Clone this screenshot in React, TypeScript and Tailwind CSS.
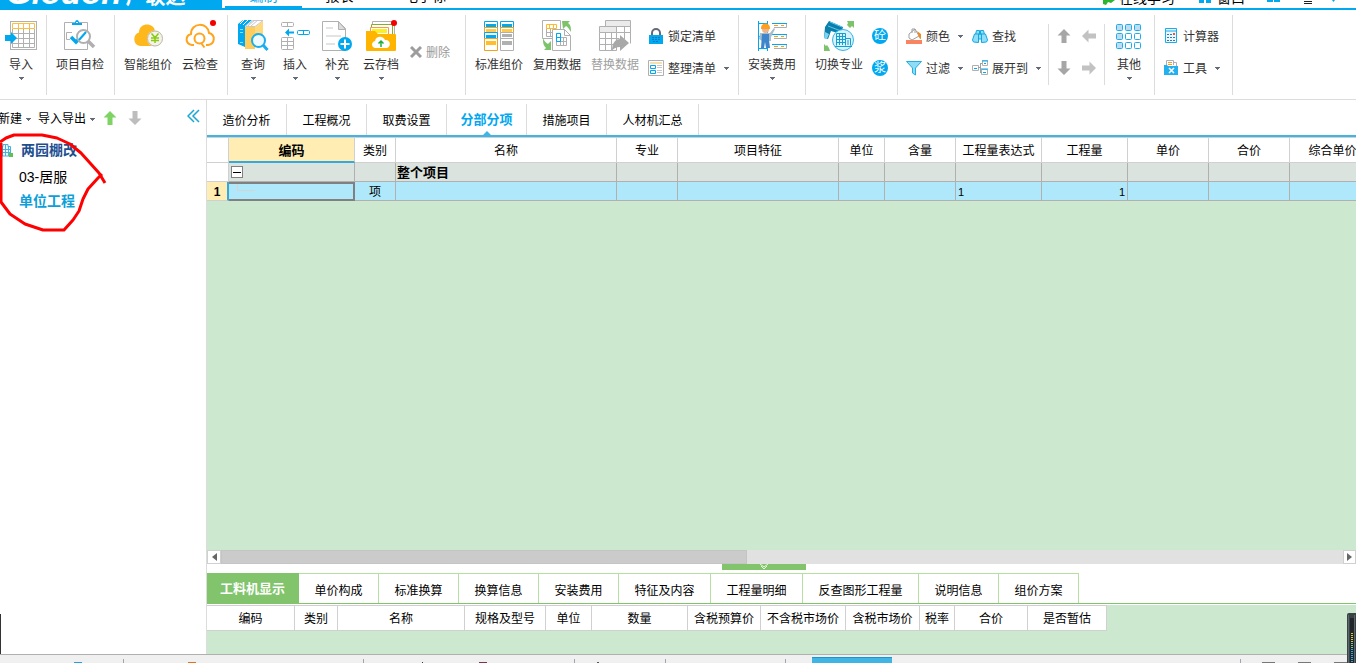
import { ReactNode, useState } from "react";
import clsx from "clsx";

const BLUE = "#00a8f0";
const GRAY = "#b0b0b0";

function Caret() {
    return (
        <svg width="5" height="3" viewBox="0 0 5 3" className="shrink-0">
            <path d="M0 0h5v1H0zM1 1h3v1H1zM2 2h1v1H2z" fill="#666b7a" />
        </svg>
    );
}

function Svg({ size = 32, children }: { size?: number; children: ReactNode }) {
    return (
        <svg
            width={size}
            height={size}
            viewBox={`0 0 ${size} ${size}`}
            fill="none"
            className="shrink-0"
        >
            {children}
        </svg>
    );
}

/* ---------- large icons ---------- */

const ImportIcon = () => (
    <Svg>
        <rect x="5.5" y="1.5" width="26" height="28" stroke={GRAY} />
        <path d="M8 13.500h22M8 18.500h22M8 23.500h22M13.500 9v18M18.500 9v18M24.500 9v18" stroke={GRAY} />
        <path d="M7.500 9v18.500h22V9" stroke={GRAY} />
        <path d="M7.500 3.500h22v5h-22zM13.500 4v5M18.500 4v5M24.500 4v5" stroke="#ffbf3a" />
        <path d="M0 15h6v-3l6 6-6 6v-3H0z" fill={BLUE} />
    </Svg>
);

const SelfCheckIcon = () => (
    <Svg>
        <path d="M.5 2.500h23v27H.5z" stroke={GRAY} />
        <path d="M8 5V3h3c0-4 4-4 4 0h3v2z" fill={BLUE} />
        <path d="M12 2.500h2" stroke="#fff" />
        <path d="M8 12.500H2.500v7H6" stroke={GRAY} />
        <path d="M7 17l5 5 4-4" stroke={BLUE} strokeWidth="3.500" />
        <circle cx="19.500" cy="16.500" r="6.500" stroke={GRAY} strokeWidth="2" fill="#fff" />
        <path d="M15 20l7-8" stroke={BLUE} strokeWidth="2" />
        <path d="M24 21l6 6" stroke={GRAY} strokeWidth="3.500" />
    </Svg>
);

const SmartPriceIcon = () => (
    <Svg>
        <path d="M8 26a7 7 0 0 1-1-13.500C7 2 22 2 23 11c6 1 6 15 0 15z" fill="#ffb81c" />
        <circle cx="23" cy="18.500" r="8" fill="#f4f2ea" />
        <circle cx="23" cy="18.500" r="7.500" stroke="#bdb9a8" />
        <path d="M19.500 13.500l3.500 4 3.500-4M19 18h8M19 20.500h8M23 17v6" stroke="#8acb12" strokeWidth="1.500" />
    </Svg>
);

const CloudCheckIcon = () => (
    <Svg>
        <path d="M10 25H8c-7-1-7-9-1-11C7 2 24 2 25 13c7 2 6 11-1 12h-2" stroke="#ffa41c" strokeWidth="2" />
        <circle cx="15.500" cy="18.500" r="5" stroke="#ffa41c" strokeWidth="2" />
        <path d="M17 23l3.500 4.500" stroke="#ffa41c" strokeWidth="2" />
        <circle cx="29" cy="3" r="3" fill="#f30000" />
    </Svg>
);

const QueryIcon = () => (
    <Svg>
        <path d="M1 4l5-4h9L8 6v21l-7-3z" fill={BLUE} />
        <path d="M3 4l4-4M6 5l5-5" stroke="#fff" />
        <path d="M3 9.500h3M3 12.500h3M3 22.500h3" stroke="#8fdcff" />
        <path d="M8 7h10v22H8z" fill="#ffcd5c" />
        <path d="M18 7l8-6v17l-8 10z" fill="#ffd97c" />
        <path d="M8.500 6.500L16 .5h10l-8 6z" fill="#fff" stroke="#c8c8c8" />
        <path d="M11 6l7-6M14 6l7-6" stroke="#c8c8c8" />
        <circle cx="21.500" cy="20.500" r="6.500" fill="#eefaff" stroke="#1badec" strokeWidth="2" />
        <path d="M26 25l4.500 5" stroke="#1badec" strokeWidth="3" />
    </Svg>
);

const InsertIcon = () => (
    <Svg>
        <rect x="2.500" y="2.500" width="12" height="4" rx="1" stroke={GRAY} />
        <path d="M8.500 3v3" stroke={GRAY} />
        <rect x="2.500" y="17.500" width="12" height="12" rx="1" stroke={GRAY} />
        <path d="M8.500 17v12M3 21.500h11M3 25.500h11" stroke={GRAY} />
        <path d="M6 12.500l4-4v3h5v2h-5v3z" fill={BLUE} />
        <rect x="18.500" y="10.500" width="12" height="4" rx="1" stroke={BLUE} />
        <path d="M24.500 11v3" stroke={BLUE} />
    </Svg>
);

const SupplementIcon = () => (
    <Svg>
        <path d="M1.500 1.500h16l7 7v22h-23z" fill="#fff" stroke={GRAY} />
        <path d="M17.500 1.500v8h7z" fill="#dcdcdc" stroke={GRAY} />
        <path d="M5 8h7M5 16h15M5 24h9" stroke="#e3e3e3" strokeWidth="2" />
        <circle cx="24" cy="24" r="7" fill={BLUE} />
        <path d="M24 19.500v9M19.500 24h9" stroke="#fff" strokeWidth="2" />
    </Svg>
);

const CloudArchiveIcon = () => (
    <Svg>
        <path d="M7.500 12V1.500h22V18" fill="#fff" stroke={GRAY} />
        <path d="M6.500 12V4.500h21V18" fill="#fff" stroke="#8aad20" />
        <path d="M5.500 12V7.500h18V18" fill="#fff" stroke="#ef9a58" />
        <path d="M7 9h15v4H7z" fill="#fff01c" />
        <path d="M1 11h9l3 3h17a1 1 0 0 1 1 1v15a1 1 0 0 1-1 1H2a1 1 0 0 1-1-1z" fill="#ffb400" />
        <path d="M10 28c-4-1-4-6 0-7 1-6 9-5 10-1 5-1 7 6 2 8z" fill="#fff" />
        <path d="M16 27v-6M13.500 23.500L16 21l2.500 2.500" stroke="#1fae3a" strokeWidth="1.500" />
        <circle cx="29" cy="3" r="3" fill="#f30000" />
    </Svg>
);

const StandardIcon = () => (
    <Svg>
        <path d="M1.500 1.500h13v6h-13zM17.500 1.500h13v6h-13z" stroke={BLUE} />
        <path d="M3 4h10v3H3zM19 4h10v3H19z" fill={BLUE} />
        <path d="M1.500 7.500h13v5h-13zM17.500 7.500h13v5h-13z" stroke="#f5a11c" />
        <path d="M3 9h10v3H3zM19 9h10v3H19z" fill="#ffcb4c" />
        <path d="M1.500 12.500h13v6h-13z" stroke={BLUE} />
        <path d="M3 15h10v3H3z" fill={BLUE} />
        <path d="M1.500 18.500h13v12h-13z" stroke="#f5a11c" />
        <path d="M3 21h10v4H3z" fill="#ffbf2c" />
        <path d="M17.500 12.500h13v18h-13zM17.500 18.500h13" stroke={GRAY} />
        <path d="M19 14h10v3H19zM19 21h10v4H19z" fill={GRAY} />
    </Svg>
);

const ReuseIcon = () => (
    <Svg>
        <path d="M1.500.5h18v18h-18z" stroke={GRAY} />
        <path d="M5.500 8.500h9v8h-9zM5 12.500h10M9.500 8v8" stroke={GRAY} />
        <path d="M5.500 4.500h10v4h-10zM8.500 4v4M12.500 4v4" stroke="#ffb92c" />
        <path d="M11.500 9.500h12l6 6v15h-18z" fill="#fff" stroke={GRAY} />
        <path d="M23.500 9.500v6h6" stroke={GRAY} />
        <path d="M15.500 13.500h4v12h-4zM19.500 17.500h6v8h-6zM15 21.500h10M22.500 17v8" stroke={GRAY} />
        <path d="M15.500 13.500h4v4h-4zM15.500 17.500h4v4h-4z" stroke={BLUE} />
        <path d="M21 1h8l-2 2c3 2 3 5 3 9-2-3-3-5-5-6l-3 3z" fill="#7cc36a" />
        <path d="M10 30H3l2-2c-3-3-3-6-3-10 1 3 3 5 5 6l3-3z" fill="#7cc36a" />
    </Svg>
);

const ReplaceIcon = () => (
    <Svg>
        <path d="M6.500.5h25v6h-25z" fill="#ebebeb" stroke={GRAY} />
        <path d="M18 6.500h13.500v17M18 12.500h13M25.500 7v12" stroke={GRAY} />
        <path d="M.5 6.500h17v6H.5z" fill="#ebebeb" stroke={GRAY} />
        <path d="M.5 12.500v18h17v-18M.5 18.500h20M.5 24.500h17M6.500 13v17M12.500 13v17" stroke={GRAY} />
        <path d="M13 31c0-9 4-12 8-12v-4l9 8-9 8v-4c-4 0-6 1-8 4z" fill="#a8a8a8" />
    </Svg>
);

const InstallIcon = () => (
    <Svg>
        <path d="M2.500 1v30M11.500 1v30M2 3.500h10M2 16.500h10M2 28.500h10" stroke={BLUE} />
        <path d="M16 3.500h14.500v4H18M16 14.500h14.500v4H18M16 24.500h14.500v4H18" stroke={GRAY} />
        <path d="M16 3.500h15M16 14.500h15M16 24.500h15" stroke={BLUE} />
        <path d="M18 5.500h4M25 5.500h3M18 16.500h4M25 16.500h3M18 26.500h4M25 26.500h3" stroke="#f5a11c" />
        <circle cx="9.500" cy="9.500" r="3.500" fill="#e9b48f" />
        <path d="M5 8a4.500 4.500 0 0 1 9 0v1H5z" fill="#ff9f1c" />
        <path d="M4 13h10l4-5 1 1-4 8v4H6l-3-2z" fill="#a8bccb" />
        <path d="M6 14h7v6l1 8h-4l-1-6-1 6H5z" fill="#3e86cc" />
    </Svg>
);

const SwitchIcon = () => (
    <Svg>
        <path d="M2 7l4-6 14 6-2 7-10-3-3 8-4-1z" fill="#0b7fab" />
        <path d="M7 2l12 5M5 6l13 5" stroke="#5ccaf0" />
        <path d="M2 12l4 2-2 5-3-1z" fill="#7ad4f2" />
        <circle cx="20" cy="20" r="10.500" fill="#d8f2fc" stroke="#35b5e8" />
        <path d="M13.500 25.500v-12h9v12M22.500 18.500h5v7M12 26.500h17" stroke="#159fd0" />
        <path d="M16.500 14v11M19.500 14v11M14 16.500h8M14 19.500h8M14 22.500h8M25 20v5" stroke="#159fd0" />
        <path d="M24 1h7v7l-2-2-2 2-3-3 1-2z" fill="#7cc36a" />
        <path d="M7 31H1v-7l2 2 1-1 2 3z" fill="#7cc36a" />
    </Svg>
);

const OtherIcon = () => (
    <Svg>
        {[4, 13, 22].map((y, r) =>
            [3, 12, 21].map((x, c) => (
                <rect
                    key={`${x}-${y}`}
                    x={x + 0.5}
                    y={y + 0.5}
                    width="6"
                    height="6"
                    rx="1"
                    stroke="#1badec"
                    fill={r === 0 || c === 0 ? "#bfdcf0" : "#fff"}
                />
            )),
        )}
    </Svg>
);

/* ---------- small icons ---------- */

const LockIcon = () => (
    <Svg size={16}>
        <path d="M4 8V5a4 4 0 0 1 8 0v3" stroke="#64697a" strokeWidth="2" />
        <path d="M1 7h14v9H1z" fill={BLUE} />
        <path d="M4 9.500h8M4 11.500h8M5 13.500h6" stroke="#0878c0" strokeDasharray="2 1" />
    </Svg>
);

const ArrangeIcon = () => (
    <Svg size={16}>
        <path d="M.5.5h15v15H.5z" stroke={GRAY} />
        <path d="M2 3h12" stroke="#f7dfae" strokeWidth="2" />
        <path d="M2.500 5.500h5v3h-5zM2.500 10.500h5v3h-5z" stroke={BLUE} />
        <path d="M9 5.500h5M9 7.500h5M9 10.500h5M9 12.500h5" stroke="#c8c8c8" />
    </Svg>
);

const DeleteIcon = () => (
    <Svg size={12}>
        <path d="M1 1l10 10M11 1L1 11" stroke="#9d9d9d" strokeWidth="3" />
    </Svg>
);

const ColorIcon = () => (
    <Svg size={16}>
        <path d="M0 12h16v4H0z" fill="#f98560" />
        <path d="M3 6l6-5 4 7-7 4-3-2z" fill="#fff" stroke="#a0a0a0" />
        <path d="M6 5V1h3v4" stroke="#a0a0a0" />
        <path d="M11 3l4 3v5c-2 0-2-3-3-5z" fill="#ef8a24" />
    </Svg>
);

const FilterIcon = () => (
    <Svg size={16}>
        <path d="M.5 1.500h15L9.500 8v7l-3-2V8z" fill="#8fdcf7" stroke="#23aee4" />
    </Svg>
);

const FindIcon = () => (
    <Svg size={16}>
        <path d="M3.500 6.500l1-4h3v4M8.500 6.500v-4h3l1 4M6 6h4v5H6z" fill="#8fdcf7" stroke="#16a6de" />
        <path d="M2.500 6h4v8.500l-5-.5-1-2zM13.500 6h-4v8.500l5-.5 1-2z" fill="#8ee0fa" stroke="#16a6de" />
    </Svg>
);

const ExpandIcon = () => (
    <Svg size={16}>
        <path d="M.5 5.500h6v5h-6zM10.500.5h5v5h-5zM9.500 9.500h6v5h-6z" stroke={GRAY} />
        <path d="M6 7.500h2M8.500 3v9M8 3.500h2M8 12.500h2" stroke="#a0a0a0" />
        <path d="M10 1h6M9 9h7" stroke={BLUE} />
        <path d="M12 3.500h2M11 12.500h3M2 8.500h3" stroke={BLUE} />
    </Svg>
);

const CalculatorIcon = () => (
    <Svg size={16}>
        <path d="M2.500.5h11v14h-11z" fill="#e9f8ff" stroke="#1badec" />
        <path d="M3 3h10" stroke="#7fd2f5" strokeWidth="2" />
        <path d="M4 6.500h6M4 9.500h9M4 12.500h9" stroke="#2f78b8" strokeDasharray="2 1" />
        <path d="M10 5h2v2h-2z" fill="#f0562f" />
    </Svg>
);

const ToolsIcon = () => (
    <Svg size={16}>
        <path d="M3.500 5V.5h7V5M10.500 2.500h3V6" fill="#fff" stroke={GRAY} />
        <path d="M5 2.500h4M5 4.500h4" stroke="#f5a11c" />
        <path d="M1 5h3l1 1h10v9H1z" fill="#22b1ee" />
        <path d="M6 8l5 5M11 8l-5 5" stroke="#fff" strokeWidth="1.500" />
    </Svg>
);

const ArrowIcon = ({ dir, color }: { dir: "up" | "down" | "left" | "right"; color: string }) => {
    const angle = { up: 0, right: 90, down: 180, left: 270 }[dir];
    return (
        <Svg size={16}>
            <path d="M8 1l6.500 6.500H10.500V15H5.500V7.500H1.500z" fill={color} transform={`rotate(${angle} 8 8)`} />
        </Svg>
    );
};

/* ---------- ribbon ---------- */

type BigToolProps = {
    icon: ReactNode;
    label: string;
    width: string;
    menu?: boolean;
    disabled?: boolean;
};

function BigTool({ icon, label, width, menu, disabled }: BigToolProps) {
    return (
        <button
            disabled={disabled}
            className={clsx(
                "flex shrink-0 flex-col items-center pt-[5px] whitespace-nowrap",
                width,
                disabled ? "text-[#a0a0a0]" : "text-[#333]",
            )}
        >
            {icon}
            <span className="mt-[5px] mb-1 leading-4">{label}</span>
            {menu && <Caret />}
        </button>
    );
}

function SmallTool({
    icon,
    label,
    menu,
    disabled,
}: {
    icon: ReactNode;
    label: string;
    menu?: boolean;
    disabled?: boolean;
}) {
    return (
        <button
            disabled={disabled}
            className={clsx(
                "flex h-4 items-center whitespace-nowrap leading-4",
                disabled ? "text-[#999]" : "text-[#333]",
            )}
        >
            {icon}
            <span className="mr-2 ml-1 pt-[2px]">{label}</span>
            {menu && <Caret />}
        </button>
    );
}

function Group({ className, children }: { className?: string; children: ReactNode }) {
    return (
        <div className={clsx("flex h-20 shrink-0 border-r border-[#dcdcdc]", className)}>
            {children}
        </div>
    );
}

function Ribbon() {
    return (
        <div className="flex h-[90px] shrink-0 overflow-hidden border-b border-[#dcdcdc] pt-[5px]">
            <Group className="w-[47px]">
                <BigTool icon={<ImportIcon />} label="导入" width="w-[42px]" menu />
            </Group>
            <Group className="w-[68px]">
                <BigTool icon={<SelfCheckIcon />} label="项目自检" width="w-[66px]" />
            </Group>
            <Group className="w-[113px] pl-1">
                <BigTool icon={<SmartPriceIcon />} label="智能组价" width="w-[58px]" />
                <BigTool icon={<CloudCheckIcon />} label="云检查" width="w-[46px]" />
            </Group>
            <Group className="w-[238px] pl-1">
                <BigTool icon={<QueryIcon />} label="查询" width="w-[42px]" menu />
                <BigTool icon={<InsertIcon />} label="插入" width="w-[42px]" menu />
                <BigTool icon={<SupplementIcon />} label="补充" width="w-[42px]" menu />
                <BigTool icon={<CloudArchiveIcon />} label="云存档" width="w-[46px]" menu />
                <div className="pt-[29px] pl-[6px]">
                    <SmallTool icon={<DeleteIcon />} label="删除" disabled />
                </div>
            </Group>
            <Group className="w-[273px] pl-1">
                <BigTool icon={<StandardIcon />} label="标准组价" width="w-[58px]" />
                <BigTool icon={<ReuseIcon />} label="复用数据" width="w-[58px]" />
                <BigTool icon={<ReplaceIcon />} label="替换数据" width="w-[58px]" disabled />
                <div className="flex flex-col gap-4 pt-[13px] pl-1">
                    <SmallTool icon={<LockIcon />} label="锁定清单" />
                    <SmallTool icon={<ArrangeIcon />} label="整理清单" menu />
                </div>
            </Group>
            <Group className="w-[67px]">
                <BigTool icon={<InstallIcon />} label="安装费用" width="w-[66px]" menu />
            </Group>
            <Group className="w-[92px] pl-1">
                <BigTool icon={<SwitchIcon />} label="切换专业" width="w-[58px]" />
                <div className="flex flex-col gap-4 pt-[13px] pl-1">
                    {["砼", "浆"].map((c) => (
                        <button
                            key={c}
                            className="size-4 rounded-full bg-[#00a8f0] text-center text-xs leading-4 text-white"
                        >
                            {c}
                        </button>
                    ))}
                </div>
            </Group>
            <div className="grid shrink-0 grid-cols-[66px_76px] content-start gap-y-4 pt-[13px] pl-2">
                <SmallTool icon={<ColorIcon />} label="颜色" menu />
                <SmallTool icon={<FindIcon />} label="查找" />
                <SmallTool icon={<FilterIcon />} label="过滤" menu />
                <SmallTool icon={<ExpandIcon />} label="展开到" menu />
            </div>
            <div className="mt-[9px] grid h-[61px] w-[57px] shrink-0 grid-cols-2 content-start gap-y-4 border-x border-[#dcdcdc] pt-1 pr-[3px] pl-[2px]">
                <button aria-label="上移" className="flex justify-center">
                    <ArrowIcon dir="up" color="#a6a6a6" />
                </button>
                <button aria-label="左移" className="flex justify-center">
                    <ArrowIcon dir="left" color="#c2c2c2" />
                </button>
                <button aria-label="下移" className="flex justify-center">
                    <ArrowIcon dir="down" color="#a6a6a6" />
                </button>
                <button aria-label="右移" className="flex justify-center">
                    <ArrowIcon dir="right" color="#c2c2c2" />
                </button>
            </div>
            <Group className="w-[50px]">
                <BigTool icon={<OtherIcon />} label="其他" width="w-[48px]" menu />
            </Group>
            <Group className="w-[78px] pl-2">
                <div className="flex flex-col gap-4 pt-[13px]">
                    <SmallTool icon={<CalculatorIcon />} label="计算器" />
                    <SmallTool icon={<ToolsIcon />} label="工具" menu />
                </div>
            </Group>
        </div>
    );
}

/* ---------- title bar ---------- */

function TitleBar() {
    return (
        <header className="flex h-[10px] shrink-0 overflow-hidden text-sm leading-4">
            <div className="flex w-[222px] shrink-0 items-end gap-1 bg-[#00a8f0] pb-[1px] pl-[6px] whitespace-nowrap text-white">
                <b className="text-[33px] leading-8 italic">Glodon</b>
                <span className="text-xl leading-6 font-bold">广联达</span>
            </div>
            <nav className="flex flex-1 items-end border-b-2 border-[#00a8f0]">
                <a href="#edit" className="ml-[3px] w-[77px] border-b-2 border-[#00a8f0] pb-[2px] text-center text-[#00a8f0]">
                    编制
                </a>
                <a href="#report" className="w-[75px] pb-1 text-center">
                    报表
                </a>
                <a href="#bid" className="w-24 pb-1 text-center">
                    电子标
                </a>
            </nav>
            <div className="flex items-end border-b-2 border-[#00a8f0]">
                <svg width="14" height="5" className="mb-[3px]">
                    <path d="M1 0h12L9 3 6 2 4 5 1 4z" fill="#2db52d" />
                </svg>
                <a href="#learn" className="ml-[3px] pb-[2px]">
                    在线学习
                </a>
                <svg width="12" height="3" className="mb-[5px] ml-6">
                    <path d="M0 0h5v3H0zM7 0h5v3H7z" fill={BLUE} />
                </svg>
                <a href="#window" className="ml-[6px] pb-[2px]">
                    窗口
                </a>
                <svg width="14" height="2" className="mb-[6px] ml-[22px]">
                    <path d="M0 0h6v2H0zM7 0h6v2H7z" fill={BLUE} />
                </svg>
                <svg width="12" height="5" className="mb-1 ml-[21px]" fill="none">
                    <path d="M0 .5h12M2 2.500h8M2 4.500h8" stroke="#222" />
                </svg>
                <svg width="3" height="2" className="mr-[21px] mb-[6px] ml-[18px]">
                    <path d="M0 0h3L1.500 2z" fill={BLUE} />
                </svg>
            </div>
        </header>
    );
}

/* ---------- left panel ---------- */

function Sidebar() {
    return (
        <aside className="relative w-[207px] shrink-0 border-r border-[#dcdcdc]">
            <div className="flex h-9 items-center whitespace-nowrap">
                <button className="-ml-[2px] flex items-center gap-1 pt-[2px]">
                    新建 <Caret />
                </button>
                <button className="ml-[7px] flex items-center gap-1 pt-[2px]">
                    导入导出 <Caret />
                </button>
                <button aria-label="上移" className="ml-[7px]">
                    <ArrowIcon dir="up" color="#7ed463" />
                </button>
                <button aria-label="下移" className="ml-[9px]">
                    <ArrowIcon dir="down" color="#bdbdbd" />
                </button>
                <button aria-label="收起" className="mr-[6px] mb-1 ml-auto">
                    <svg width="13" height="14" viewBox="0 0 13 14" fill="none">
                        <path d="M7 1L1 7l6 6M12 1L6 7l6 6" stroke="#18a8d4" strokeWidth="1.500" />
                    </svg>
                </button>
            </div>
            <ul>
                <li className="flex h-7 items-center gap-2 text-sm font-bold text-[#1e4f90]">
                    <svg width="13" height="13" viewBox="0 0 13 13" fill="none">
                        <path d="M0 2.500h3V.5h5v2h2.500V12H0z" fill="#e6f6fd" stroke="#4bb1dc" />
                        <path d="M2.500 3v9M5.500 1v11M8.500 3v9M0 5.500h10M0 8.500h10" stroke="#4bb1dc" />
                        <path d="M9 9h4v4H9z" fill="#62c14e" />
                    </svg>
                    两园棚改
                </li>
                <li className="mt-px h-6 pl-[19px] text-sm leading-6">03-居服</li>
                <li className="h-6 pl-[19px] text-sm leading-6 font-bold text-[#0f9fd8]">单位工程</li>
            </ul>
            <svg
                width="110"
                height="110"
                viewBox="0 0 110 110"
                fill="none"
                className="pointer-events-none absolute top-[25px] left-0"
            >
                <path
                    d="M0 17L6 13L14 10L42 10L57 13L70 19L81 28L90 38L99 48L105 58M102 49L98 53L88 64L83 74L79 86L73 95L64 105L43 105L25 99L10 89L1 77V18"
                    stroke="#f00"
                    strokeWidth="3"
                    strokeLinejoin="round"
                />
            </svg>
            <span className="absolute bottom-0 left-0 h-10 w-px bg-[#333]" />
        </aside>
    );
}

/* ---------- main table ---------- */

const columns = [
    { label: "", width: 22 },
    { label: "编码", width: 126 },
    { label: "类别", width: 41, value: "项", align: "text-center" },
    { label: "名称", width: 221 },
    { label: "专业", width: 61 },
    { label: "项目特征", width: 161 },
    { label: "单位", width: 46 },
    { label: "含量", width: 71 },
    { label: "工程量表达式", width: 86, value: "1", align: "text-left" },
    { label: "工程量", width: 86, value: "1", align: "text-right" },
    { label: "单价", width: 81 },
    { label: "合价", width: 81 },
    { label: "综合单价", width: 86 },
];

function ProjectTable() {
    return (
        <table className="w-[1169px] table-fixed border-separate border-spacing-0 border-t border-[#d0d0d0]">
            <colgroup>
                {columns.map((col) => (
                    <col key={col.label} style={{ width: col.width }} />
                ))}
            </colgroup>
            <thead>
                <tr className="h-[25px]">
                    {columns.map((col) => (
                        <th
                            key={col.label}
                            className={clsx(
                                "border-r p-0 pt-[2px] leading-4 whitespace-nowrap",
                                col.label === "编码"
                                    ? "border-b-2 border-r-[#d0d0d0] border-b-[#35a8dc] bg-[#ffedb3] text-[13px] font-bold"
                                    : "border-b border-[#d0d0d0] bg-white font-normal",
                            )}
                        >
                            {col.label}
                        </th>
                    ))}
                </tr>
            </thead>
            <tbody>
                <tr className="h-[19px] bg-[#dae3de]">
                    <td className="border-r border-b border-[#d0d0d0] bg-white p-0" />
                    <td className="border-r border-b border-[#b0b0b0] p-0 pl-[2px]">
                        <button
                            aria-label="折叠"
                            className="flex size-3 items-center justify-center border border-[#808080] bg-white"
                        >
                            <span className="h-px w-2 bg-black" />
                        </button>
                    </td>
                    {columns.slice(2).map((col) => (
                        <td
                            key={col.label}
                            className="border-r border-b border-[#b0b0b0] p-0 pt-[2px] pl-[1px] text-[13px] leading-4 font-bold"
                        >
                            {col.label === "名称" && "整个项目"}
                        </td>
                    ))}
                </tr>
                <tr className="h-[19px] bg-[#aee8fa]">
                    <td className="border-r-2 border-b border-r-[#35a8dc] border-b-[#d0d0d0] bg-[#ffedb3] p-0 pt-[2px] text-center leading-4 font-bold">
                        1
                    </td>
                    <td className="border-y-2 border-r-2 border-[#808080] p-0">
                        <span className="ml-2 block h-[7px] w-[18px] -translate-y-1 border-b border-l border-[#d4d4d4]" />
                    </td>
                    {columns.slice(2).map((col) => (
                        <td
                            key={col.label}
                            className={clsx(
                                "border-r border-b border-[#b0b0b0] px-[2px] pt-[2px] pb-0 leading-4",
                                col.value === "1" && "text-[11px]",
                                col.align,
                            )}
                        >
                            {col.value}
                        </td>
                    ))}
                </tr>
            </tbody>
        </table>
    );
}

const topTabs = [
    { label: "造价分析", width: "w-20" },
    { label: "工程概况", width: "w-20" },
    { label: "取费设置", width: "w-20" },
    { label: "分部分项", width: "w-20" },
    { label: "措施项目", width: "w-20" },
    { label: "人材机汇总", width: "w-[92px]" },
];

function TopTabs() {
    const [active, setActive] = useState("分部分项");
    return (
        <nav className="flex h-[37px] shrink-0 border-b-2 border-[#41b4e6] pt-1">
            {topTabs.map((tab) => (
                <button
                    key={tab.label}
                    onClick={() => setActive(tab.label)}
                    className={clsx(
                        "relative shrink-0 border-r border-[#dcdcdc] leading-4",
                        tab.width,
                        active === tab.label ? "text-[13px] font-bold text-[#00a8f0]" : "pt-[2px]",
                    )}
                >
                    {tab.label}
                    {active === tab.label && (
                        <svg width="8" height="4" className="absolute bottom-0 left-9">
                            <path d="M0 4l4-4 4 4z" fill="#41b4e6" />
                        </svg>
                    )}
                </button>
            ))}
        </nav>
    );
}

function ScrollBar() {
    return (
        <div className="flex h-[14px] shrink-0 bg-[#e1e1e1]">
            <button aria-label="向左滚动" className="flex w-[14px] items-center justify-center border border-[#d0d0d0] bg-white">
                <svg width="5" height="8">
                    <path d="M5 0v8L0 4z" fill="#666" />
                </svg>
            </button>
            <div className="w-[526px] border border-[#c4c4c4] bg-[#cbcbcb]" />
            <button
                aria-label="向右滚动"
                className="ml-auto flex w-[13px] items-center justify-center border border-[#d0d0d0] bg-white"
            >
                <svg width="5" height="8">
                    <path d="M0 0v8l5-4z" fill="#666" />
                </svg>
            </button>
        </div>
    );
}

/* ---------- bottom pane ---------- */

const bottomTabs = [
    { label: "工料机显示", width: "w-[92px]" },
    { label: "单价构成", width: "w-20" },
    { label: "标准换算", width: "w-20" },
    { label: "换算信息", width: "w-20" },
    { label: "安装费用", width: "w-20" },
    { label: "特征及内容", width: "w-[92px]" },
    { label: "工程量明细", width: "w-[92px]" },
    { label: "反查图形工程量", width: "w-[116px]" },
    { label: "说明信息", width: "w-20" },
    { label: "组价方案", width: "w-20" },
];

const detailColumns = [
    { label: "编码", width: 88 },
    { label: "类别", width: 43 },
    { label: "名称", width: 127 },
    { label: "规格及型号", width: 81 },
    { label: "单位", width: 46 },
    { label: "数量", width: 96 },
    { label: "含税预算价", width: 73 },
    { label: "不含税市场价", width: 85 },
    { label: "含税市场价", width: 74 },
    { label: "税率", width: 35 },
    { label: "合价", width: 73 },
    { label: "是否暂估", width: 79 },
];

function BottomPane() {
    const [active, setActive] = useState("工料机显示");
    return (
        <section className="shrink-0">
            <div className="h-[9px] bg-white pl-[515px]">
                <button aria-label="收起明细" className="flex h-[6px] w-[84px] justify-center bg-[#82c46c]">
                    <svg width="8" height="6" fill="none">
                        <path d="M0 0l4 3 4-3M1 2l3 3 3-3" stroke="#e8f8e0" />
                    </svg>
                </button>
            </div>
            <nav className="flex h-[31px] border-b border-[#82c46c] bg-white">
                {bottomTabs.map((tab) => (
                    <button
                        key={tab.label}
                        onClick={() => setActive(tab.label)}
                        className={clsx(
                            "shrink-0 border-t border-r leading-4",
                            tab.width,
                            active === tab.label
                                ? "border-[#82c46c] bg-[#82c46c] text-[13px] font-bold text-white"
                                : "border-[#b4e0a0] pt-[4px]",
                        )}
                    >
                        {tab.label}
                    </button>
                ))}
            </nav>
            <div className="h-[50px] overflow-hidden border-t border-white">
                <table className="w-[900px] table-fixed border-separate border-spacing-0">
                    <colgroup>
                        {detailColumns.map((col) => (
                            <col key={col.label} style={{ width: col.width }} />
                        ))}
                    </colgroup>
                    <thead>
                        <tr className="h-[26px]">
                            {detailColumns.map((col) => (
                                <th
                                    key={col.label}
                                    className="border-t border-r border-b border-[#d0d0d0] bg-white p-0 pt-px leading-4 font-normal whitespace-nowrap"
                                >
                                    {col.label}
                                </th>
                            ))}
                        </tr>
                    </thead>
                </table>
            </div>
        </section>
    );
}

function StatusBar() {
    return (
        <footer className="flex h-[9px] shrink-0 items-end overflow-hidden border-t border-[#b0b0b0] bg-[#f0f0f0]">
            <div className="flex h-1 w-[124px] items-end justify-center border-r border-[#a0a5b4] pl-8">
                <span className="h-px w-2 bg-[#2a9be0]" />
            </div>
            <div className="flex h-1 w-[240px] items-end border-r border-[#a0a5b4] pl-16">
                <span className="h-px w-2 bg-[#e07020]" />
            </div>
            <div className="flex h-1 w-[211px] items-end gap-14 border-r border-[#a0a5b4] pl-[58px]">
                <span className="h-px w-px bg-[#333]" />
                <span className="h-px w-2 bg-[#803050]" />
            </div>
            <div className="flex h-1 w-[91px] items-end border-r border-[#a0a5b4] pl-[22px]">
                <span className="h-px w-[2px] bg-[#555]" />
            </div>
            <div className="h-1 w-[120px] border-r border-[#a0a5b4]" />
            <button aria-label="状态" className="ml-[26px] h-[6px] w-20 border-t border-[#1b96cc] bg-[#41b4e6]" />
            <div className="ml-auto flex h-1 w-[116px] items-end gap-[23px] border-l border-[#a0a5b4] pl-[21px]">
                <span className="h-px w-[13px] bg-[#777]" />
                <span className="h-px w-[13px] bg-[#777]" />
                <span className="h-px w-[13px] bg-[#777]" />
            </div>
        </footer>
    );
}

// Level meter docked to the right edge of the window
function Meter() {
    return (
        <svg width="9" height="50" viewBox="0 0 9 50" fill="none" className="absolute right-0 bottom-0">
            <rect width="12" height="54" rx="2" fill="#3a4248" />
            <path d="M1.500 2v48M7.500 2v48" stroke="#5c686e" />
            <path d="M3 5h4v45H3z" fill="#20262a" />
            <path d="M5 20v10" stroke="#d8c840" strokeWidth="2" strokeDasharray="1 1" />
            <path d="M5 30v6" stroke="#78c890" strokeWidth="2" strokeDasharray="1 1" />
            <path d="M5 36v14" stroke="#30a8e0" strokeWidth="2" strokeDasharray="1 1" />
        </svg>
    );
}

export default function App() {
    return (
        <div className="relative flex h-screen flex-col overflow-hidden bg-white font-['Liberation_Sans','Noto_Sans_CJK_SC',sans-serif] text-xs text-black">
            <TitleBar />
            <Ribbon />
            <div className="flex min-h-0 flex-1">
                <Sidebar />
                <main className="flex min-w-0 flex-1 flex-col bg-[#cce8cf]">
                    <div className="bg-white">
                        <TopTabs />
                    </div>
                    <div className="min-h-0 flex-1 overflow-hidden">
                        <ProjectTable />
                    </div>
                    <ScrollBar />
                    <BottomPane />
                </main>
            </div>
            <StatusBar />
            <Meter />
        </div>
    );
}
